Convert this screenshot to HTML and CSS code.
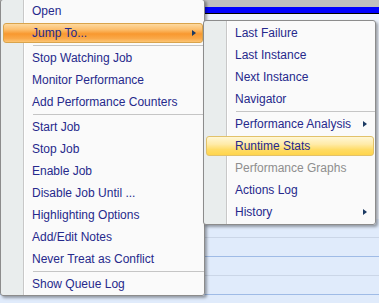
FILE: index.html
```html
<!DOCTYPE html>
<html>
<head>
<meta charset="utf-8">
<link rel="stylesheet" href="styles.css">
</head>
<body>
<div class="app">
  <div class="titlebar"></div>
  <div class="bluebar"></div>
  <div class="grid">
    <div class="spacer"></div>
    <div class="row"></div>
    <div class="row alt"></div>
    <div class="row"></div>
    <div class="row alt"></div>
    <div class="row"></div>
  </div>
</div>

<div class="menu main">
  <div class="item">Open</div>
  <div class="item hot-orange"><span>Jump To...</span><span class="arrow"></span></div>
  <div class="sep"></div>
  <div class="item">Stop Watching Job</div>
  <div class="item">Monitor Performance</div>
  <div class="item">Add Performance Counters</div>
  <div class="sep"></div>
  <div class="item">Start Job</div>
  <div class="item">Stop Job</div>
  <div class="item">Enable Job</div>
  <div class="item">Disable Job Until ...</div>
  <div class="item">Highlighting Options</div>
  <div class="item">Add/Edit Notes</div>
  <div class="item">Never Treat as Conflict</div>
  <div class="sep"></div>
  <div class="item">Show Queue Log</div>
</div>

<div class="menu sub">
  <div class="item">Last Failure</div>
  <div class="item">Last Instance</div>
  <div class="item">Next Instance</div>
  <div class="item">Navigator</div>
  <div class="sep"></div>
  <div class="item"><span>Performance Analysis</span><span class="arrow"></span></div>
  <div class="item hot-yellow">Runtime Stats</div>
  <div class="item disabled">Performance Graphs</div>
  <div class="item">Actions Log</div>
  <div class="item"><span>History</span><span class="arrow"></span></div>
</div>
</body>
</html>
```

FILE: styles.css
```css
html, body {
  margin: 0;
  padding: 0;
}
body {
  width: 379px;
  height: 303px;
  overflow: hidden;
  position: relative;
  font-family: "Liberation Sans", Arial, sans-serif;
  font-size: 12px;
}
.app {
  height: 303px;
  background: #e0ebfb;
}
.titlebar {
  height: 7px;
  background: #bfbfbf;
}
.bluebar {
  height: 6px;
  background: #0000ff;
  border-bottom: 1px solid #000000;
}
.spacer {
  height: 205px;
  background: #eef4fd;
}
.row {
  height: 19px;
  box-sizing: border-box;
  border-bottom: 1px solid #cbd6e7;
  background: #e0ebfb;
}
.row.alt {
  border-bottom-color: #9fbbe6;
}

.menu {
  position: absolute;
  box-sizing: border-box;
  display: flex;
  flex-direction: column;
  border: 1px solid #8c8c8c;
  border-radius: 3px;
  background: linear-gradient(to right, #e9eded 0 22px, #c8c8c8 22px 23px, #ffffff 23px 24px, #fafafa 24px);
  box-shadow: 2px 2px 3px rgba(0, 0, 0, 0.35);
}
.main {
  left: 0;
  top: -1px;
  width: 205px;
}
.sub {
  left: 203px;
  top: 20px;
  width: 173px;
  padding: 1px 0;
}
.item {
  box-sizing: border-box;
  height: 20px;
  margin: 1px 1px 1px 2px;
  border: 1px solid transparent;
  border-radius: 3px;
  padding: 0 6px 0 28px;
  display: flex;
  align-items: center;
  justify-content: space-between;
  white-space: nowrap;
  color: #26298c;
}
.item.disabled {
  color: #8e8e8e;
}
.hot-orange {
  border-color: #d9a44c;
  background: linear-gradient(#fdd9a0 0%, #fcbf6e 30%, #f8982f 55%, #faa848 80%, #fcc573 100%);
}
.hot-yellow {
  border-color: #e2c26a;
  background: linear-gradient(#fff7d6 0%, #ffeba8 40%, #ffdc66 70%, #ffd54c 100%);
}
.arrow {
  width: 0;
  height: 0;
  border-left: 4px solid #1b3a63;
  border-top: 3.5px solid transparent;
  border-bottom: 3.5px solid transparent;
}
.sep {
  height: 1px;
  margin: 1px 0 1px 32px;
  background: #c5c5c5;
}
```
